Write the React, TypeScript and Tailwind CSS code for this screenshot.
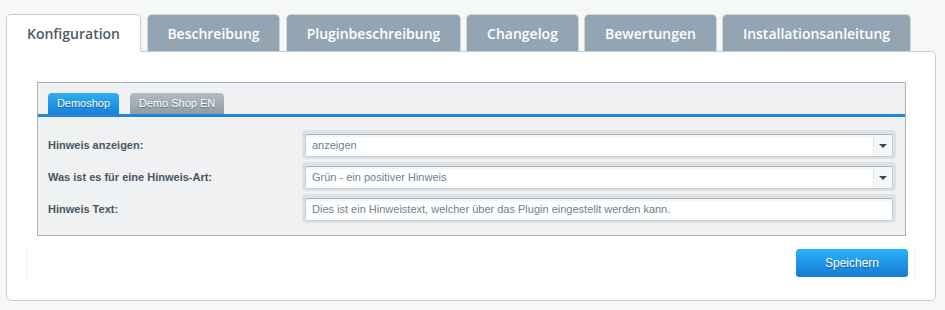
import { useState } from 'react'

const tabs = [
  { label: 'Konfiguration', w: 'w-[135px]' },
  { label: 'Beschreibung', w: 'w-[133px] ml-px' },
  { label: 'Pluginbeschreibung', w: 'w-[175px] ml-px' },
  { label: 'Changelog', w: 'w-[113px]' },
  { label: 'Bewertungen', w: 'w-[133px]' },
  { label: 'Installationsanleitung', w: 'w-[189px]' },
]

function SelectBox({ value }: { value: string }) {
  return (
    <div className="h-[29px] rounded-[4px] bg-[#dce1e5] pt-[4px] pl-[3px] pr-[3px] pb-[2px]">
      <div className="flex h-full rounded-[2px] border border-[#c4ccd3] border-t-[#a9b3bc] bg-white shadow-[inset_0_2px_2px_rgba(0,0,0,0.06)]">
        <div className="flex-1 pl-[6px] text-[11px] leading-[21px] text-[#71808d]">{value}</div>
        <div className="flex w-[19px] items-center justify-center border-l border-[#e2e6ea] bg-[#f5f6f7]">
          <div className="h-0 w-0 border-x-[4px] border-t-[4px] border-x-transparent border-t-[#3f464d]" />
        </div>
      </div>
    </div>
  )
}

function TextBox({ value }: { value: string }) {
  return (
    <div className="h-[29px] rounded-[4px] bg-[#dce1e5] pt-[4px] pl-[3px] pr-[3px] pb-[2px]">
      <div className="h-full rounded-[2px] border border-[#c4ccd3] border-t-[#a9b3bc] bg-white pl-[6px] text-[11px] leading-[21px] text-[#71808d] shadow-[inset_0_2px_2px_rgba(0,0,0,0.06)]">
        {value}
      </div>
    </div>
  )
}

export default function App() {
  const [active, setActive] = useState(0)
  const [shop, setShop] = useState(0)

  const rows = [
    { label: 'Hinweis anzeigen:', field: <SelectBox value="anzeigen" /> },
    { label: 'Was ist es für eine Hinweis-Art:', field: <SelectBox value="Grün - ein positiver Hinweis" /> },
    {
      label: 'Hinweis Text:',
      field: <TextBox value="Dies ist ein Hinweistext, welcher über das Plugin eingestellt werden kann." />,
    },
  ]

  return (
    <div className="h-[310px] bg-[#f6f7f7] font-['Liberation_Sans',Arial,sans-serif]">
      <div className="flex gap-[5px] pl-[6px] pt-[14px]">
        {tabs.map((t, i) => (
          <button
            key={t.label}
            onClick={() => setActive(i)}
            className={`${t.w} relative -mb-px h-[38px] rounded-t-[5px] border font-['Open_Sans',sans-serif] text-[14px] font-semibold ${
              i === active
                ? 'z-10 border-[#c9cccf] border-b-white bg-white text-[#4e5c68]'
                : 'border-[#cfd5da] border-b-[#c9cccf] bg-[#93a5b2] text-white'
            }`}
          >
            {t.label}
          </button>
        ))}
      </div>

      <div className="ml-[6px] h-[250px] w-[930px] rounded-b-[5px] rounded-tr-[5px] border border-[#c9cccf] bg-white pl-[30px] pr-[29px] pt-[30px]">
        <div className="border border-[#a8b5c1] bg-[#eff1f3] pb-[12px]">
          <div className="flex gap-[11px] border-b-[3px] border-[#1f86d9] pl-[10px] pt-[10px]">
            {['Demoshop', 'Demo Shop EN'].map((s, i) => (
              <button
                key={s}
                onClick={() => setShop(i)}
                className={`h-[21px] rounded-t-[4px] text-[11px] text-white [text-shadow:0_1px_1px_rgba(0,0,0,0.35)] ${
                  i === 0 ? 'w-[71px]' : 'w-[94px]'
                } ${
                  i === shop
                    ? 'bg-gradient-to-b from-[#2eaef3] to-[#1a80da]'
                    : 'bg-gradient-to-b from-[#b1bcc5] to-[#8f9ca7]'
                }`}
              >
                {s}
              </button>
            ))}
          </div>

          <div className="flex flex-col gap-[3px] pt-[13px]">
            {rows.map((r) => (
              <div key={r.label} className="flex items-center pl-[10px] pr-[9px]">
                <div className="w-[254px] pt-px text-[11px] font-bold text-[#4a5561]">{r.label}</div>
                <div className="flex-1">{r.field}</div>
              </div>
            ))}
          </div>
        </div>

        <div className="-ml-[10px] -mr-[10px] mt-[10px] flex h-[34px] justify-end border-x border-[#f1f2f3] pr-[7px] pt-[3px]">
          <button className="h-[28px] w-[112px] rounded-[3px] bg-gradient-to-b from-[#2db1f6] to-[#167ad6] text-[12px] text-white [text-shadow:0_1px_1px_rgba(0,0,0,0.3)]">
            Speichern
          </button>
        </div>
      </div>
    </div>
  )
}
